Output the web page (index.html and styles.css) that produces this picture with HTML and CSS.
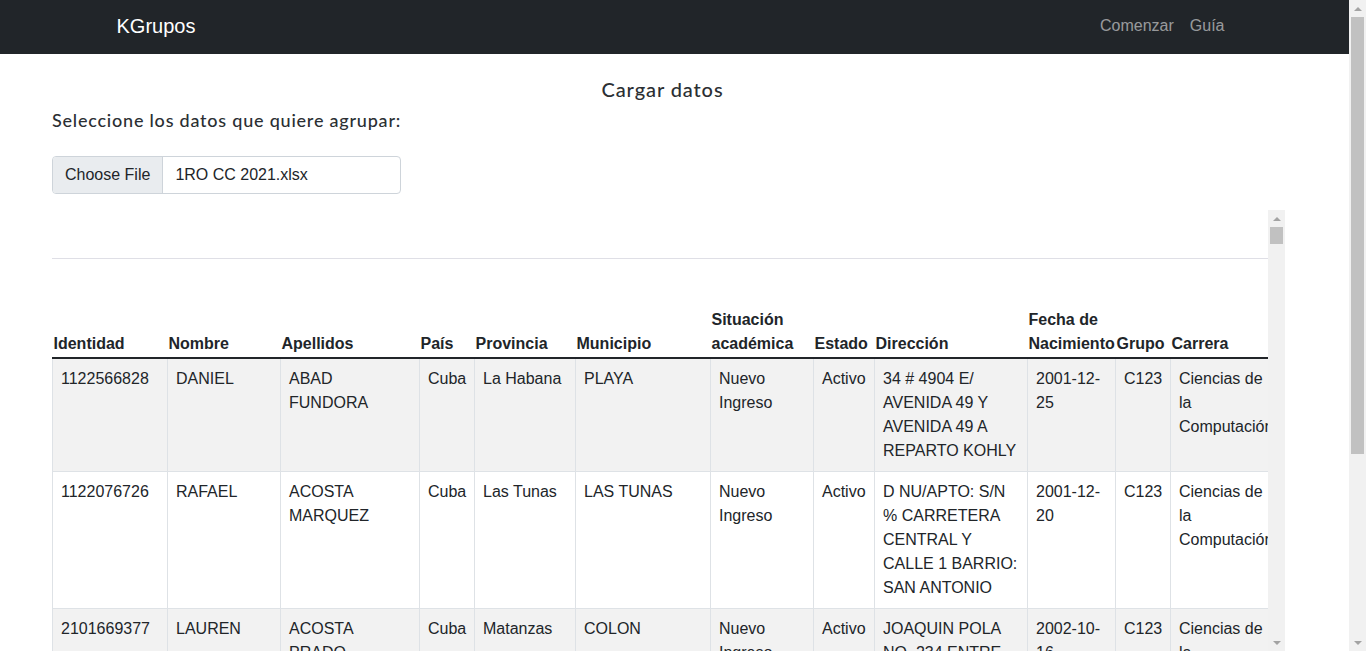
FILE: index.html
```html
<!DOCTYPE html>
<html lang="es">
<head>
<meta charset="utf-8">
<title>KGrupos</title>
<link rel="stylesheet" href="styles.css">
</head>
<body>
<div class="page">
  <nav class="navbar">
    <div class="nav-container">
      <a class="brand" href="#">KGrupos</a>
      <ul class="nav-links">
        <li><a class="nav-link" href="#">Comenzar</a></li>
        <li><a class="nav-link" href="#">Guía</a></li>
      </ul>
    </div>
  </nav>
  <main class="main">
    <h1 class="title">Cargar datos</h1>
    <h2 class="subtitle">Seleccione los datos que quiere agrupar:</h2>
    <div class="file-input"><span class="file-btn">Choose File</span><span class="file-name">1RO CC 2021.xlsx</span></div>
    <div class="table-frame">
      <div class="table-scroll">
        <div class="spacer"></div>
        <hr class="divider">
        <table class="data-table">
          <colgroup>
            <col class="c-id"><col class="c-nom"><col class="c-ape"><col class="c-pais"><col class="c-prov"><col class="c-mun"><col class="c-sit"><col class="c-est"><col class="c-dir"><col class="c-fec"><col class="c-gru"><col class="c-car">
          </colgroup>
          <thead>
            <tr>
              <th>Identidad</th><th>Nombre</th><th>Apellidos</th><th>País</th><th>Provincia</th><th>Municipio</th><th>Situación académica</th><th>Estado</th><th>Dirección</th><th>Fecha de Nacimiento</th><th>Grupo</th><th>Carrera</th>
            </tr>
          </thead>
          <tbody id="rows">
            <tr>
              <td>1122566828</td><td>DANIEL</td><td>ABAD FUNDORA</td><td>Cuba</td><td>La Habana</td><td>PLAYA</td><td>Nuevo Ingreso</td><td>Activo</td><td>34 # 4904 E/ AVENIDA 49 Y AVENIDA 49 A REPARTO KOHLY</td><td>2001-12-25</td><td>C123</td><td>Ciencias de la Computación</td>
            </tr>
            <tr>
              <td>1122076726</td><td>RAFAEL</td><td>ACOSTA MARQUEZ</td><td>Cuba</td><td>Las Tunas</td><td>LAS TUNAS</td><td>Nuevo Ingreso</td><td>Activo</td><td>D NU/APTO: S/N % CARRETERA CENTRAL Y CALLE 1 BARRIO: SAN ANTONIO</td><td>2001-12-20</td><td>C123</td><td>Ciencias de la Computación</td>
            </tr>
            <tr>
              <td>2101669377</td><td>LAUREN</td><td>ACOSTA PRADO</td><td>Cuba</td><td>Matanzas</td><td>COLON</td><td>Nuevo Ingreso</td><td>Activo</td><td>JOAQUIN POLA NO. 234 ENTRE MARTI Y MAXIMO GOMEZ</td><td>2002-10-16</td><td>C123</td><td>Ciencias de la Computación</td>
            </tr>
          </tbody>
        </table>
      </div>
      <div class="vscroll" aria-hidden="true">
        <span class="sb-btn"><span class="arrow-up"></span></span>
        <span class="sb-thumb inner-thumb"></span>
        <span class="sb-track"></span>
        <span class="sb-btn"><span class="arrow-down"></span></span>
      </div>
      <div class="hscroll" aria-hidden="true">
        <span class="sb-btn"><span class="arrow-left"></span></span>
        <span class="sb-thumb-h"></span>
        <span class="sb-track"></span>
        <span class="sb-btn"><span class="arrow-right"></span></span>
      </div>
      <div class="sb-corner" aria-hidden="true"></div>
    </div>
  </main>
</div>
<div class="page-scrollbar" aria-hidden="true">
  <span class="sb-btn"><span class="arrow-up"></span></span>
  <span class="sb-thumb page-thumb"></span>
  <span class="sb-track"></span>
  <span class="sb-btn"><span class="arrow-down"></span></span>
</div>
<script src="script.js"></script>
</body>
</html>
```

FILE: styles.css
```css
* { box-sizing: border-box; }
html, body { margin: 0; padding: 0; }
body {
  font-family: "Liberation Sans", Arial, sans-serif;
  font-size: 16px;
  line-height: 1.5;
  color: #212529;
  background: #fff;
}
.page {
  margin-right: 17px;
}

/* fake classic scrollbars */
.page-scrollbar {
  position: fixed;
  top: 0;
  right: 0;
  width: 17px;
  height: 100vh;
  background: #f1f1f1;
  display: flex;
  flex-direction: column;
}
.vscroll {
  background: #f1f1f1;
  display: flex;
  flex-direction: column;
}
.hscroll {
  background: #f1f1f1;
  display: flex;
  flex-direction: row;
}
.sb-corner { background: #dcdcdc; }
.sb-btn {
  flex: 0 0 17px;
  height: 17px;
  width: 17px;
  display: flex;
  align-items: center;
  justify-content: center;
}
.sb-track { flex: 1 1 auto; }
.sb-thumb {
  display: block;
  margin: 0 2px;
  background: #c1c1c1;
}
.inner-thumb { flex: 0 0 17px; }
.page-thumb { flex: 0 0 437px; }
.sb-thumb-h {
  flex: 0 0 1180px;
  margin: 2px 0;
  background: #c1c1c1;
}
.arrow-up, .arrow-down, .arrow-left, .arrow-right {
  width: 0;
  height: 0;
  display: block;
}
.arrow-up {
  border-left: 4px solid transparent;
  border-right: 4px solid transparent;
  border-bottom: 4px solid #a3a3a3;
}
.arrow-down {
  border-left: 4px solid transparent;
  border-right: 4px solid transparent;
  border-top: 4px solid #a3a3a3;
}
.arrow-left {
  border-top: 4px solid transparent;
  border-bottom: 4px solid transparent;
  border-right: 4px solid #a3a3a3;
}
.arrow-right {
  border-top: 4px solid transparent;
  border-bottom: 4px solid transparent;
  border-left: 4px solid #a3a3a3;
}

.navbar {
  background: #212529;
  height: 54px;
}
.nav-container {
  max-width: 1140px;
  margin: 0 auto;
  padding: 0 12px;
  height: 100%;
  display: flex;
  align-items: center;
  justify-content: space-between;
}
.brand {
  color: #fff;
  text-decoration: none;
  font-size: 20px;
  line-height: 30px;
  margin-top: -2px;
}
.nav-links {
  list-style: none;
  margin: 0;
  padding: 0;
  display: flex;
}
.nav-link {
  display: block;
  padding: 0 8px;
  color: rgba(255,255,255,.55);
  text-decoration: none;
  font-size: 16px;
  margin-top: -2px;
}
.main {
  padding: 23px 64px 251px 52px;
}
.title {
  font-family: Lato, "Liberation Sans", sans-serif;
  font-weight: 500;
  font-size: 20px;
  line-height: 24px;
  letter-spacing: 0.9px;
  margin: 0 12px 8px 0;
  text-align: center;
  color: #2b2f33;
}
.subtitle {
  font-family: Lato, "Liberation Sans", sans-serif;
  font-weight: 500;
  font-size: 18px;
  line-height: 22px;
  letter-spacing: 0.78px;
  margin: 0 0 25px;
  color: #2b2f33;
}
.file-input {
  display: flex;
  width: 349px;
  height: 38px;
  border: 1px solid #ced4da;
  border-radius: 4px;
  overflow: hidden;
  margin-bottom: 16px;
}
.file-btn {
  background: #e9ecef;
  border-right: 1px solid #ced4da;
  padding: 6px 12px;
  line-height: 24px;
}
.file-name {
  padding: 6px 12px;
  line-height: 24px;
}
.table-frame {
  display: grid;
  grid-template-columns: minmax(0, 1fr) 17px;
  grid-template-rows: 441px 17px;
}
.table-scroll {
  overflow: hidden;
  min-width: 0;
}
.spacer { height: 48px; }
.divider {
  margin: 0;
  border: 0;
  border-top: 1px solid #dfdfe6;
  height: 0;
}
.data-table {
  margin-top: 49px;
  border-collapse: collapse;
  table-layout: fixed;
  width: 1231px;
}
.c-id { width: 115px; }
.c-nom { width: 113px; }
.c-ape { width: 139px; }
.c-pais { width: 55px; }
.c-prov { width: 101px; }
.c-mun { width: 135px; }
.c-sit { width: 103px; }
.c-est { width: 61px; }
.c-dir { width: 153px; }
.c-fec { width: 88px; }
.c-gru { width: 55px; }
.c-car { width: 113px; }
.data-table th {
  text-align: left;
  vertical-align: bottom;
  font-weight: bold;
  padding: 0 0 1px 1px;
  border-bottom: 2px solid #212529;
}
.data-table td {
  vertical-align: top;
  padding: 8px;
  border: 1px solid #dee2e6;
  overflow: hidden;
}
.data-table tbody tr:nth-child(odd) td { background: #f2f2f2; }
.data-table tbody tr:first-child td { border-top: 2px solid #212529; }
```

FILE: script.js
```js
(function () {
  var names = ["ANA", "CARLOS", "MARIA", "JOSE", "LAURA", "PEDRO", "ELENA", "JORGE", "SOFIA", "LUIS"];
  var last = ["ALVAREZ", "BLANCO", "CASTRO", "DIAZ", "FERNANDEZ", "GARCIA", "HERNANDEZ", "LOPEZ", "MARTINEZ", "PEREZ"];
  var prov = [["La Habana", "PLAYA"], ["Matanzas", "CARDENAS"], ["Holguín", "HOLGUIN"], ["Villa Clara", "SANTA CLARA"], ["Camagüey", "CAMAGUEY"]];
  var body = document.getElementById("rows");
  for (var i = 0; i < 80; i++) {
    var p = prov[i % prov.length];
    var cells = [
      String(2100000000 + i * 7919),
      names[i % names.length],
      last[i % last.length] + " " + last[(i * 3 + 1) % last.length],
      "Cuba", p[0], p[1], "Nuevo Ingreso", "Activo",
      "CALLE " + (i + 2) + " NO. " + (100 + i) + " ENTRE A Y B",
      "2002-0" + (1 + i % 9) + "-1" + (i % 10),
      "C123", "Ciencias de la Computación"
    ];
    var tr = document.createElement("tr");
    cells.forEach(function (c) {
      var td = document.createElement("td");
      td.textContent = c;
      tr.appendChild(td);
    });
    body.appendChild(tr);
  }
})();
```
